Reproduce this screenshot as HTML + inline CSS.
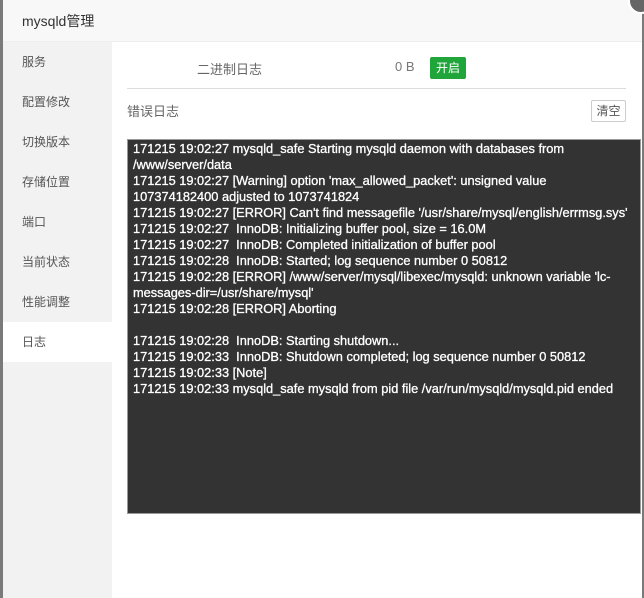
<!DOCTYPE html>
<html><head><meta charset="utf-8"><style>
*{margin:0;padding:0;box-sizing:border-box}
body{width:644px;height:598px;background:#7a7a7a;position:relative;overflow:hidden;font-family:"Liberation Sans","Noto Sans CJK SC",sans-serif}
.dlg{position:absolute;left:3px;top:0;width:639px;height:598px;background:#fff}
.hd{height:42px;background:#f8f8f8;border-bottom:1px solid #eee;font-size:14px;color:#333;line-height:42px;padding-left:19px}
.side{position:absolute;left:0;top:42px;width:109px;bottom:0;background:#f2f2f2}
.side div{height:40px;line-height:40px;padding-left:19px;font-size:12px;color:#555}
.side .on{background:#fff}
.main{position:absolute;left:109px;top:42px;right:0;bottom:0}
.r1{position:absolute;left:15px;top:0;width:499px;height:47px;border-bottom:1px solid #ddd;font-size:13px;color:#666}
.close{position:absolute;right:-12px;top:-12px;width:26px;height:26px;border-radius:50%;background:#666;border:2px solid #fff}
pre{position:absolute;left:15px;top:97px;width:514px;height:375px;background:#333;border:1px solid #999;color:#fff;font-family:"Liberation Sans",sans-serif;font-size:12.8px;line-height:16px;padding:1px 5px;-webkit-text-stroke:0.3px #fff;white-space:pre}
</style></head><body>
<div class="dlg">
<div class="hd">mysqld管理</div>
<div class="close"></div>
<div class="side">
<div>服务</div><div>配置修改</div><div>切换版本</div><div>存储位置</div><div>端口</div><div>当前状态</div><div>性能调整</div><div class="on">日志</div>
</div>
<div class="main">
<div class="r1">
<span style="position:absolute;left:70px;top:17px">二进制日志</span>
<span style="position:absolute;left:268px;top:17px;color:#777">0 B</span>
<span style="position:absolute;left:303px;top:15px;width:36px;height:22px;background:#20a53a;color:#fff;font-size:12px;line-height:22px;text-align:center;border-radius:2px">开启</span>
</div>
<span style="position:absolute;left:15px;top:59px;font-size:13px;color:#666">错误日志</span>
<span style="position:absolute;left:479px;top:58px;width:35px;height:22px;border:1px solid #ccc;border-radius:2px;font-size:12px;color:#555;line-height:20px;text-align:center;background:#fff">清空</span>
<pre>171215 19:02:27 mysqld_safe Starting mysqld daemon with databases from
/www/server/data
171215 19:02:27 [Warning] option 'max_allowed_packet': unsigned value
107374182400 adjusted to 1073741824
171215 19:02:27 [ERROR] Can't find messagefile '/usr/share/mysql/english/errmsg.sys'
171215 19:02:27  InnoDB: Initializing buffer pool, size = 16.0M
171215 19:02:27  InnoDB: Completed initialization of buffer pool
171215 19:02:28  InnoDB: Started; log sequence number 0 50812
171215 19:02:28 [ERROR] /www/server/mysql/libexec/mysqld: unknown variable 'lc-
messages-dir=/usr/share/mysql'
171215 19:02:28 [ERROR] Aborting

171215 19:02:28  InnoDB: Starting shutdown...
171215 19:02:33  InnoDB: Shutdown completed; log sequence number 0 50812
171215 19:02:33 [Note]
171215 19:02:33 mysqld_safe mysqld from pid file /var/run/mysqld/mysqld.pid ended</pre>
</div>
</div>
</body></html>
